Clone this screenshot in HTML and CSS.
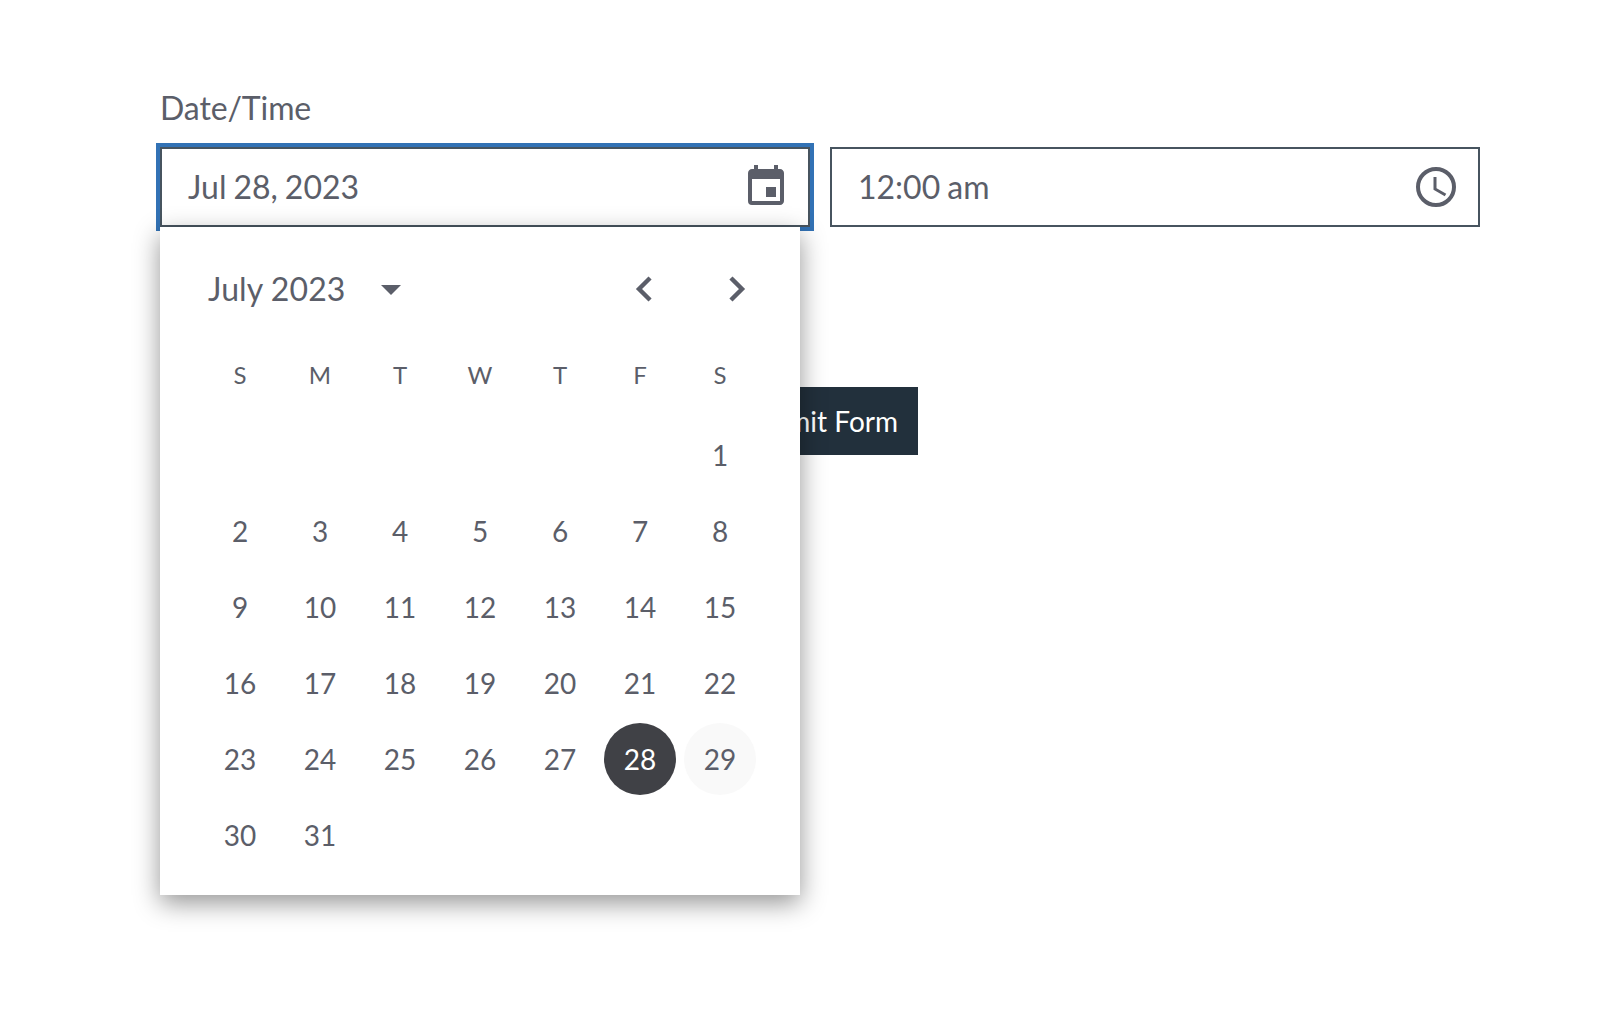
FILE: index.html
```html
<!DOCTYPE html>
<html lang="en">
<head>
<meta charset="utf-8">
<title>Date/Time</title>
<link rel="stylesheet" href="styles.css">
</head>
<body>
<form class="form">
  <div class="field-label">Date/Time</div>
  <div class="field-row">
    <div class="picker">
      <div class="input input-focused">
        <span class="input-value">Jul 28, 2023</span>
        <svg class="input-icon" viewBox="0 0 24 24" width="48" height="48"><path fill="currentColor" d="M17 12h-5v5h5v-5zM16 1v2H8V1H6v2H5c-1.11 0-1.99.9-1.99 2L3 19a2 2 0 0 0 2 2h14c1.1 0 2-.9 2-2V5c0-1.1-.9-2-2-2h-1V1h-2zm3 18H5V8h14v11z"/></svg>
      </div>
      <div class="calendar">
        <div class="cal-header">
          <span class="cal-title">July 2023</span>
          <svg class="cal-caret" viewBox="0 0 20 10" width="20" height="10"><path fill="currentColor" d="M0 0h20L10 10z"/></svg>
          <span class="cal-nav">
            <svg viewBox="0 0 48 48" width="48" height="48"><path fill="none" stroke="currentColor" stroke-width="4.4" stroke-linecap="square" stroke-linejoin="miter" d="M28.5 14.5 L19 24 L28.5 33.5"/></svg>
            <svg viewBox="0 0 48 48" width="48" height="48"><path fill="none" stroke="currentColor" stroke-width="4.4" stroke-linecap="square" stroke-linejoin="miter" d="M19.5 14.5 L29 24 L19.5 33.5"/></svg>
          </span>
        </div>
        <div class="cal-weekdays">
          <span>S</span><span>M</span><span>T</span><span>W</span><span>T</span><span>F</span><span>S</span>
        </div>
        <div class="cal-days">
          <span class="day day-blank"></span><span class="day day-blank"></span><span class="day day-blank"></span><span class="day day-blank"></span><span class="day day-blank"></span><span class="day day-blank"></span><span class="day">1</span>
          <span class="day">2</span><span class="day">3</span><span class="day">4</span><span class="day">5</span><span class="day">6</span><span class="day">7</span><span class="day">8</span>
          <span class="day">9</span><span class="day">10</span><span class="day">11</span><span class="day">12</span><span class="day">13</span><span class="day">14</span><span class="day">15</span>
          <span class="day">16</span><span class="day">17</span><span class="day">18</span><span class="day">19</span><span class="day">20</span><span class="day">21</span><span class="day">22</span>
          <span class="day">23</span><span class="day">24</span><span class="day">25</span><span class="day">26</span><span class="day">27</span><span class="day day-selected">28</span><span class="day day-hover">29</span>
          <span class="day">30</span><span class="day">31</span>
        </div>
      </div>
    </div>
    <div class="input">
      <span class="input-value">12:00 am</span>
      <svg class="input-icon" viewBox="0 0 48 48" width="48" height="48"><circle cx="24" cy="24" r="18" fill="none" stroke="currentColor" stroke-width="4"/><path fill="none" stroke="currentColor" stroke-width="3" d="M23 14V26L33.5 32"/></svg>
    </div>
  </div>
  <div class="actions">
    <button class="submit" type="button">Submit Form</button>
  </div>
</form>
</body>
</html>
```
FILE: styles.css
```css
* { box-sizing: border-box; }
html, body { margin: 0; height: 100%; background: #fff; }
body {
  font-family: Lato, "Liberation Sans", sans-serif;
  color: #5b5e69;
  overflow: hidden;
}
.form { padding: 88px 120px 0 160px; }
.field-label { font-size: 32px; line-height: 40px; height: 59px; letter-spacing: -0.1px; }
.field-row { display: flex; gap: 20px; }
.picker { position: relative; flex: 0 0 650px; }
.input {
  flex: 1;
  height: 80px;
  display: flex;
  align-items: center;
  justify-content: space-between;
  padding: 0 18px 0 26px;
  border: 2px solid #47545f;
  background: #fff;
}
.input-focused { outline: 4px solid #3272b5; outline-offset: 0; }
.input-value { font-size: 32px; line-height: 40px; word-spacing: -1.2px; }
.input-icon { display: block; }
.calendar {
  position: absolute;
  left: 0;
  top: 80px;
  z-index: 2;
  width: 640px;
  height: 668px;
  padding: 0 40px;
  background: #fff;
  box-shadow: 0 8px 24px rgba(0, 0, 0, 0.42);
}
.cal-header { display: flex; align-items: center; height: 124px; padding-left: 8px; }
.cal-title { font-size: 32px; line-height: 40px; letter-spacing: 0.1px; }
.cal-caret { margin: 2px 0 0 35px; }
.cal-nav { margin-left: auto; display: flex; gap: 45px; margin-right: -1px; }
.cal-nav svg { display: block; }
.cal-weekdays {
  display: grid;
  grid-template-columns: repeat(7, 80px);
  height: 46px;
  align-items: center;
  justify-items: center;
  font-size: 24px;
}
.cal-days {
  display: grid;
  grid-template-columns: repeat(7, 80px);
  grid-auto-rows: 76px;
  margin-top: 20px;
  justify-items: center;
  align-items: center;
}
.day {
  width: 72px;
  height: 72px;
  border-radius: 50%;
  display: flex;
  align-items: center;
  justify-content: center;
  font-size: 28px;
}
.day-selected { background: #404146; color: #fff; }
.day-hover { background: #f9f9f9; }
.actions { display: flex; justify-content: flex-end; margin-top: 160px; width: 758px; }
.submit {
  height: 68px;
  padding: 0 20px;
  border: 0;
  border-radius: 0;
  background: #22303c;
  color: #fff;
  font-family: inherit;
  font-size: 28px;
}
```
